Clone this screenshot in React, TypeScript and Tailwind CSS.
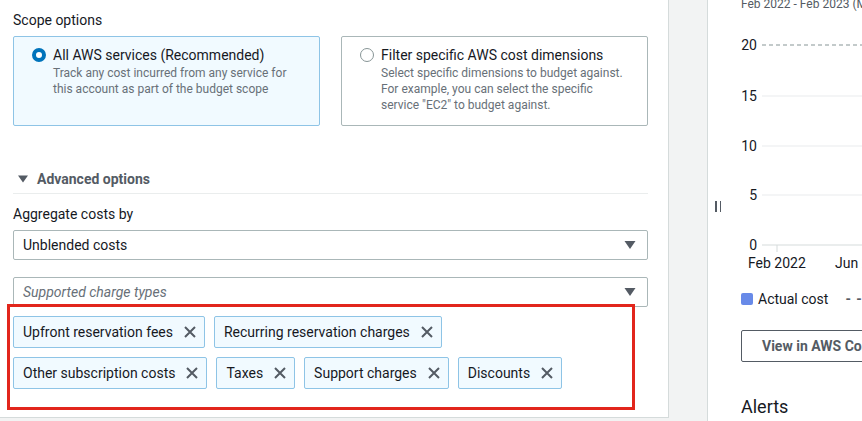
import React from 'react';

const chips = [
  ['Upfront reservation fees', 'Recurring reservation charges'],
  ['Other subscription costs', 'Taxes', 'Support charges', 'Discounts'],
];

function CloseIcon() {
  return (
    <svg width="14" height="14" viewBox="0 0 14 14" className="shrink-0">
      <path d="M2 2 L12 12 M12 2 L2 12" stroke="#545b64" strokeWidth="2" fill="none" />
    </svg>
  );
}

function Caret() {
  return (
    <svg width="12" height="10" viewBox="0 0 12 10">
      <path d="M0.5 1 L11.5 1 L6 9 Z" fill="#545b64" />
    </svg>
  );
}

function Chip({ label }: { label: string }) {
  return (
    <div className="flex h-[32px] items-center gap-[10px] rounded-[2px] border border-[#8ec4e6] bg-[#f1faff] pl-[9px] pr-[7px] text-[14px] text-[#16191f]">
      <span>{label}</span>
      <CloseIcon />
    </div>
  );
}

function ScopeCard({
  selected,
  title,
  lines,
}: {
  selected: boolean;
  title: string;
  lines: string[];
}) {
  return (
    <div
      className={`h-[90px] rounded-[2px] border pt-[8px] pl-[18px] ${
        selected ? 'border-[#8ec4e6] bg-[#f1faff]' : 'border-[#aab7b8] bg-white'
      }`}
    >
      <div className="flex items-start gap-[7px]">
        <div className="mt-[3px] flex h-[14px] w-[14px] items-center justify-center">
          {selected ? (
            <div className="h-[14px] w-[14px] rounded-full border-[4px] border-[#0073bb] bg-white" />
          ) : (
            <div className="h-[14px] w-[14px] rounded-full border-[1.5px] border-[#879596] bg-white" />
          )}
        </div>
        <div>
          <div className="text-[14px] leading-[20px] text-[#16191f]">{title}</div>
          {lines.map((l) => (
            <div key={l} className="text-[12px] leading-[16px] text-[#687078]">
              {l}
            </div>
          ))}
        </div>
      </div>
    </div>
  );
}

export default function App() {
  return (
    <div
      className="flex h-[421px] w-[862px] overflow-hidden bg-[#f2f3f3]"
      style={{ fontFamily: 'Roboto, "Liberation Sans", sans-serif' }}
    >
      {/* left form panel */}
      <div className="relative h-[418px] w-[669px] shrink-0 border-r border-b border-[#d5dbdb] bg-white pt-[10px] pl-[13px] pr-[20px]">
        <div className="text-[14px] leading-[20px] text-[#16191f]">Scope options</div>
        <div className="mt-[6px] grid grid-cols-2 gap-[21px]">
          <ScopeCard
            selected
            title="All AWS services (Recommended)"
            lines={['Track any cost incurred from any service for', 'this account as part of the budget scope']}
          />
          <ScopeCard
            selected={false}
            title="Filter specific AWS cost dimensions"
            lines={[
              'Select specific dimensions to budget against.',
              'For example, you can select the specific',
              'service "EC2" to budget against.',
            ]}
          />
        </div>

        <div className="mt-[43px] flex items-center gap-[9px] border-b border-[#eaeded] pb-[4px] pl-[5px]">
          <svg width="10" height="8" viewBox="0 0 10 8">
            <path d="M0 0.5 L10 0.5 L5 7.5 Z" fill="#545b64" />
          </svg>
          <span className="text-[14px] font-bold leading-[20px] text-[#545b64]">Advanced options</span>
        </div>

        <div className="mt-[10px] text-[14px] leading-[20px] text-[#16191f]">Aggregate costs by</div>
        <div className="mt-[6px] flex h-[30px] items-center justify-between rounded-[2px] border border-[#aab7b8] pl-[9px] pr-[11px]">
          <span className="text-[14px] text-[#16191f]">Unblended costs</span>
          <Caret />
        </div>
        <div className="mt-[17px] flex h-[30px] items-center justify-between rounded-[2px] border border-[#aab7b8] pl-[9px] pr-[11px]">
          <span className="text-[14px] italic text-[#687078]">Supported charge types</span>
          <Caret />
        </div>

        <div className="mt-[9px] flex flex-col gap-[9px]">
          {chips.map((row, i) => (
            <div key={i} className="flex gap-[9px]">
              {row.map((c) => (
                <Chip key={c} label={c} />
              ))}
            </div>
          ))}
        </div>

        {/* red annotation frame */}
        <div className="pointer-events-none absolute left-[7px] top-[304px] h-[106px] w-[628px] border-[3px] border-[#e2261c]" />
      </div>

      {/* gray gutter */}
      <div className="w-[39px] shrink-0 border-r border-[#d5dbdb]" />

      {/* right chart panel */}
      <div className="relative flex-1 bg-white pl-[33px]">
        <div className="absolute left-[7px] top-[201px] flex gap-[3px]">
          <div className="h-[11px] w-[1.5px] bg-[#545b64]" />
          <div className="h-[11px] w-[1.5px] bg-[#545b64]" />
        </div>

        <div className="-mt-[4px] whitespace-nowrap text-[12px] leading-[16px] text-[#545b64]">
          Feb 2022 - Feb 2023 (M
        </div>

        <svg width="130" height="262" className="-ml-[2px] block overflow-visible">
          <g fontSize="14" fill="#16191f" style={{ fontFamily: 'Roboto, sans-serif' }}>
            <text x="18" y="38" textAnchor="end">20</text>
            <text x="18" y="89" textAnchor="end">15</text>
            <text x="18" y="139" textAnchor="end">10</text>
            <text x="18" y="188" textAnchor="end">5</text>
            <text x="18" y="238" textAnchor="end">0</text>
            <text x="9" y="256">Feb 2022</text>
            <text x="96" y="256">Jun 2</text>
          </g>
          <line x1="23" y1="33" x2="130" y2="33" stroke="#879596" strokeDasharray="4 3" />
          <line x1="23" y1="84" x2="130" y2="84" stroke="#e9ebed" />
          <line x1="23" y1="134" x2="130" y2="134" stroke="#e9ebed" />
          <line x1="23" y1="183" x2="130" y2="183" stroke="#e9ebed" />
          <line x1="23" y1="233" x2="130" y2="233" stroke="#d5dbdb" />
          <line x1="38" y1="233" x2="38" y2="240" stroke="#d5dbdb" />
        </svg>

        <div className="mt-[15px] flex items-center gap-[5px] whitespace-nowrap text-[14px] leading-[20px] text-[#16191f]">
          <div className="h-[12px] w-[12px] rounded-[2px] bg-[#688ae8]" />
          <span>Actual cost</span>
          <span className="ml-[12px] font-bold tracking-[1px] text-[#545b64]">- -</span>
        </div>

        <div className="mt-[21px] flex h-[32px] w-[160px] items-center whitespace-nowrap rounded-[2px] border border-[#545b64] pl-[20px] text-[14px] font-bold text-[#545b64]">
          View in AWS Cost Explorer
        </div>

        <div className="mt-[33px] text-[18px] leading-[24px] text-[#16191f]">Alerts</div>
      </div>
    </div>
  );
}
